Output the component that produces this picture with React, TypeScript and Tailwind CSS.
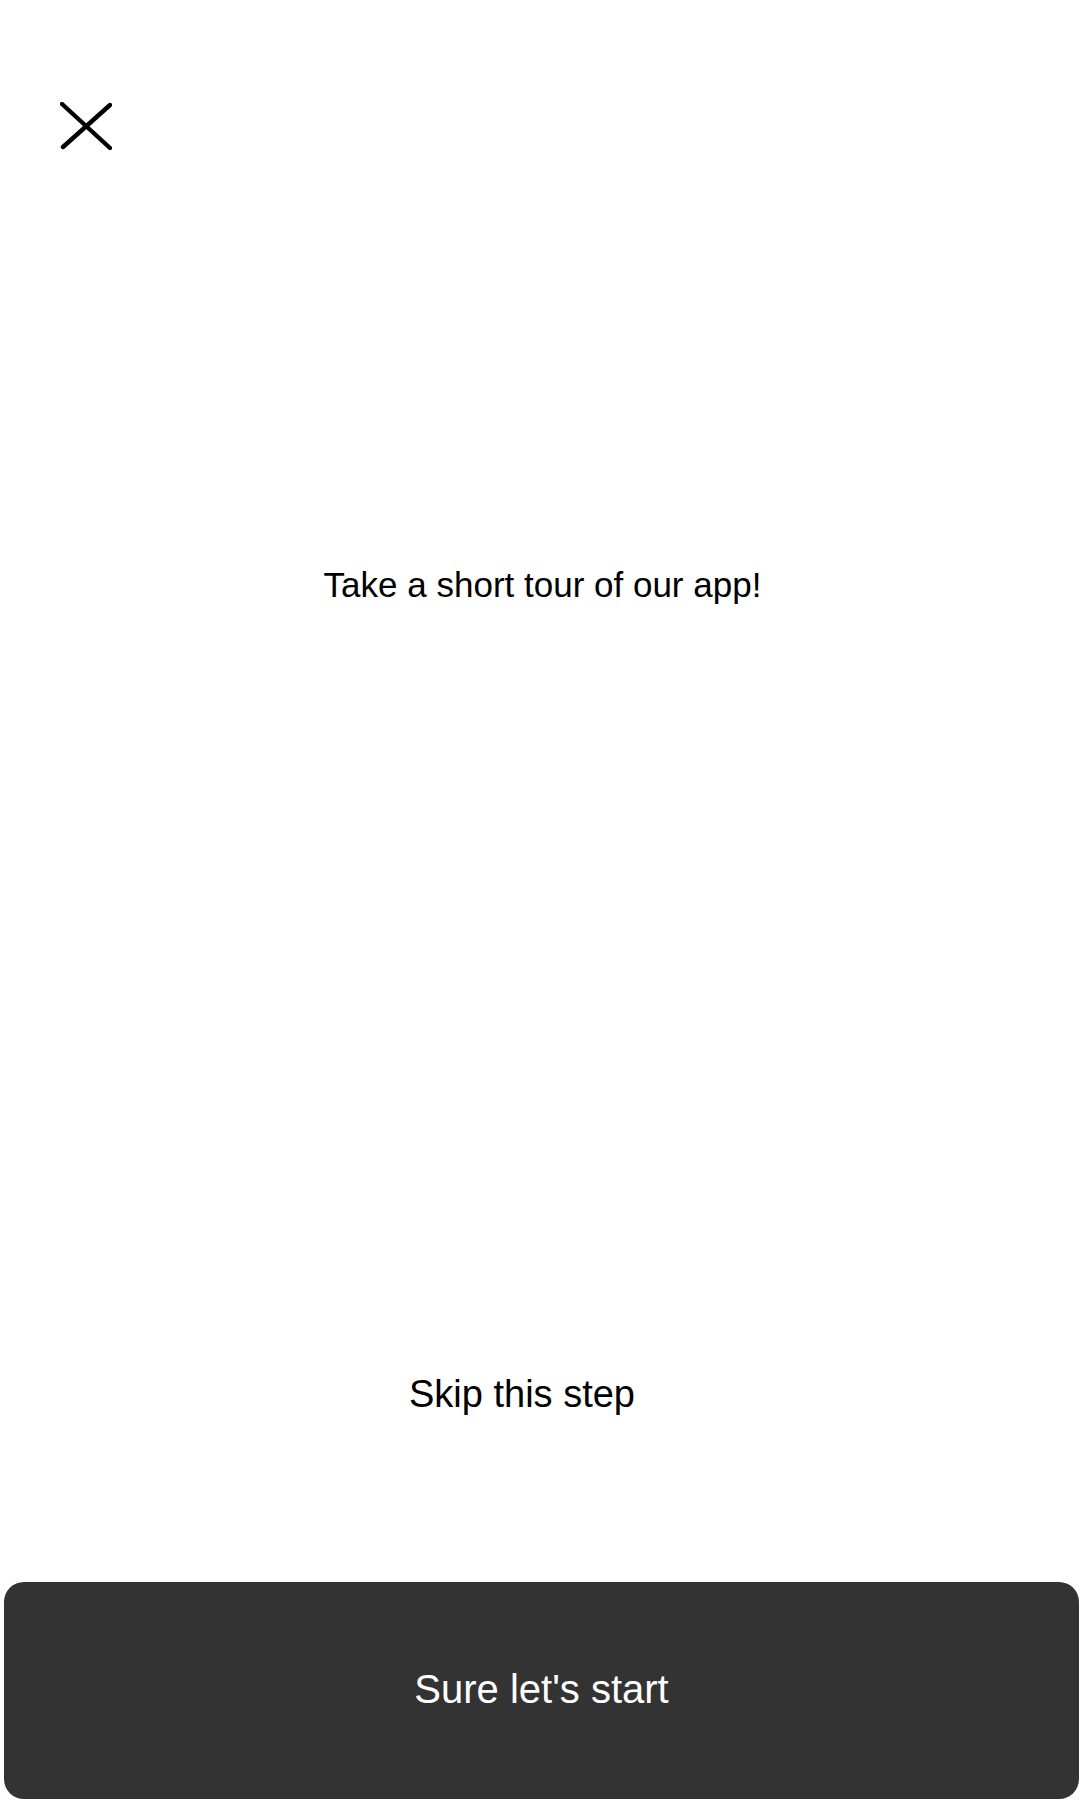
const CloseIcon = () => (
  <svg width="52" height="48" viewBox="0 0 52 48" fill="none">
    <path d="M2 2 L50 46" stroke="#000" strokeWidth="4.4" strokeLinecap="round" />
    <path d="M50 3 L3 45" stroke="#000" strokeWidth="4.4" strokeLinecap="round" />
  </svg>
);

const App = () => {
  return (
    <div
      className="w-[1080px] h-[1800px] bg-white flex flex-col overflow-hidden"
      style={{ fontFamily: '"Liberation Sans", Arial, sans-serif' }}
    >
      <button className="mt-[102px] ml-[60px] w-[52px] h-[48px]">
        <CloseIcon />
      </button>
      <h1 className="mt-[417px] pl-[5px] text-center text-[35px] leading-none text-black">
        Take a short tour of our app!
      </h1>
      <p className="mt-[773px] pr-[36px] text-center text-[38px] leading-none text-black">Skip this step</p>
      <button className="mt-[169px] ml-[4px] w-[1075px] h-[217px] pb-[4px] rounded-[20px] bg-[#333333] text-white text-[40px]">
        Sure let's start
      </button>
    </div>
  );
};

export default App;
